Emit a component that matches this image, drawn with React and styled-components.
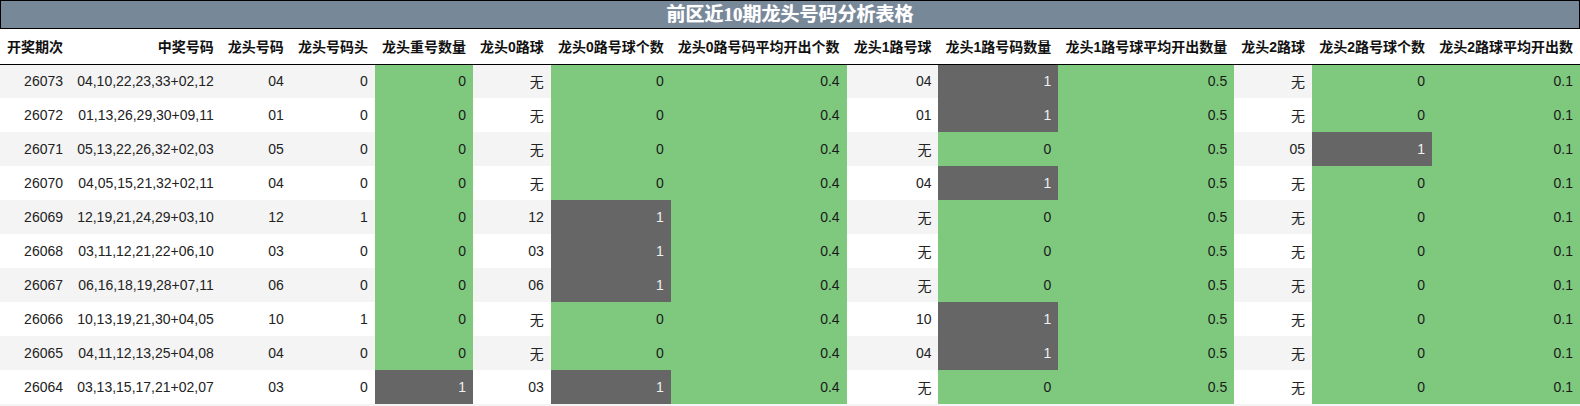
import React from "react";
import styled, { createGlobalStyle, css } from "styled-components";

const GlobalStyle = createGlobalStyle`
  html, body {
    margin: 0;
    padding: 0;
    background: #f4f4f4;
  }
  #root {
    width: 1580px;
  }
`;

const Wrapper = styled.div`
  width: 1580px;
  font-family: "Liberation Sans", "Noto Sans CJK SC", sans-serif;
  color: #222;
`;

const Title = styled.div`
  box-sizing: border-box;
  height: 29px;
  border: 1px solid #000;
  background: #778899;
  color: #fff;
  display: flex;
  align-items: center;
  justify-content: center;
  font-family: "Liberation Serif", "Noto Sans CJK SC", serif;
  font-weight: bold;
  font-size: 19px;
  line-height: 1;
  text-shadow: 0 0 1px rgba(255, 255, 255, 0.6);
`;

const Table = styled.table`
  width: 100%;
  border-collapse: collapse;
  border-spacing: 0;
  font-size: 14px;
  white-space: nowrap;
`;

const HeadRow = styled.tr`
  height: 35px;
  background: #fff;
  border-bottom: 1px solid #000;
`;

const HeadCell = styled.th`
  padding: 0 7px;
  text-align: right;
  font-weight: bold;
  color: #111;
`;

const BodyRow = styled.tr`
  height: 34px;
  background: ${(p) => (p.$striped ? "#f4f4f4" : "#ffffff")};
`;

const Cell = styled.td`
  padding: 0 7px;
  text-align: right;
  vertical-align: middle;
  ${(p) =>
    p.$tone === "green" &&
    css`
      background: #7fc97f;
      color: #1a1a1a;
    `}
  ${(p) =>
    p.$tone === "gray" &&
    css`
      background: #666666;
      color: #f0f0f0;
    `}
`;

const headers = [
  "开奖期次",
  "中奖号码",
  "龙头号码",
  "龙头号码头",
  "龙头重号数量",
  "龙头0路球",
  "龙头0路号球个数",
  "龙头0路号码平均开出个数",
  "龙头1路号球",
  "龙头1路号码数量",
  "龙头1路号球平均开出数量",
  "龙头2路球",
  "龙头2路号球个数",
  "龙头2路球平均开出数",
];

// column kinds: "plain" | "count" (green if 0, gray if 1) | "avg" (always green)
const kinds = [
  "plain",
  "plain",
  "plain",
  "plain",
  "count",
  "plain",
  "count",
  "avg",
  "plain",
  "count",
  "avg",
  "plain",
  "count",
  "avg",
];

const rows = [
  ["26073", "04,10,22,23,33+02,12", "04", "0", "0", "无", "0", "0.4", "04", "1", "0.5", "无", "0", "0.1"],
  ["26072", "01,13,26,29,30+09,11", "01", "0", "0", "无", "0", "0.4", "01", "1", "0.5", "无", "0", "0.1"],
  ["26071", "05,13,22,26,32+02,03", "05", "0", "0", "无", "0", "0.4", "无", "0", "0.5", "05", "1", "0.1"],
  ["26070", "04,05,15,21,32+02,11", "04", "0", "0", "无", "0", "0.4", "04", "1", "0.5", "无", "0", "0.1"],
  ["26069", "12,19,21,24,29+03,10", "12", "1", "0", "12", "1", "0.4", "无", "0", "0.5", "无", "0", "0.1"],
  ["26068", "03,11,12,21,22+06,10", "03", "0", "0", "03", "1", "0.4", "无", "0", "0.5", "无", "0", "0.1"],
  ["26067", "06,16,18,19,28+07,11", "06", "0", "0", "06", "1", "0.4", "无", "0", "0.5", "无", "0", "0.1"],
  ["26066", "10,13,19,21,30+04,05", "10", "1", "0", "无", "0", "0.4", "10", "1", "0.5", "无", "0", "0.1"],
  ["26065", "04,11,12,13,25+04,08", "04", "0", "0", "无", "0", "0.4", "04", "1", "0.5", "无", "0", "0.1"],
  ["26064", "03,13,15,17,21+02,07", "03", "0", "1", "03", "1", "0.4", "无", "0", "0.5", "无", "0", "0.1"],
];

function toneFor(kind, value) {
  if (kind === "avg") return "green";
  if (kind === "count") return value === "0" ? "green" : "gray";
  return undefined;
}

export default function App() {
  return (
    <Wrapper>
      <GlobalStyle />
      <Title>前区近10期龙头号码分析表格</Title>
      <Table>
        <thead>
          <HeadRow>
            {headers.map((h) => (
              <HeadCell key={h}>{h}</HeadCell>
            ))}
          </HeadRow>
        </thead>
        <tbody>
          {rows.map((r, i) => (
            <BodyRow key={r[0]} $striped={i % 2 === 0}>
              {r.map((v, j) => (
                <Cell key={j} $tone={toneFor(kinds[j], v)}>
                  {v}
                </Cell>
              ))}
            </BodyRow>
          ))}
        </tbody>
      </Table>
    </Wrapper>
  );
}
